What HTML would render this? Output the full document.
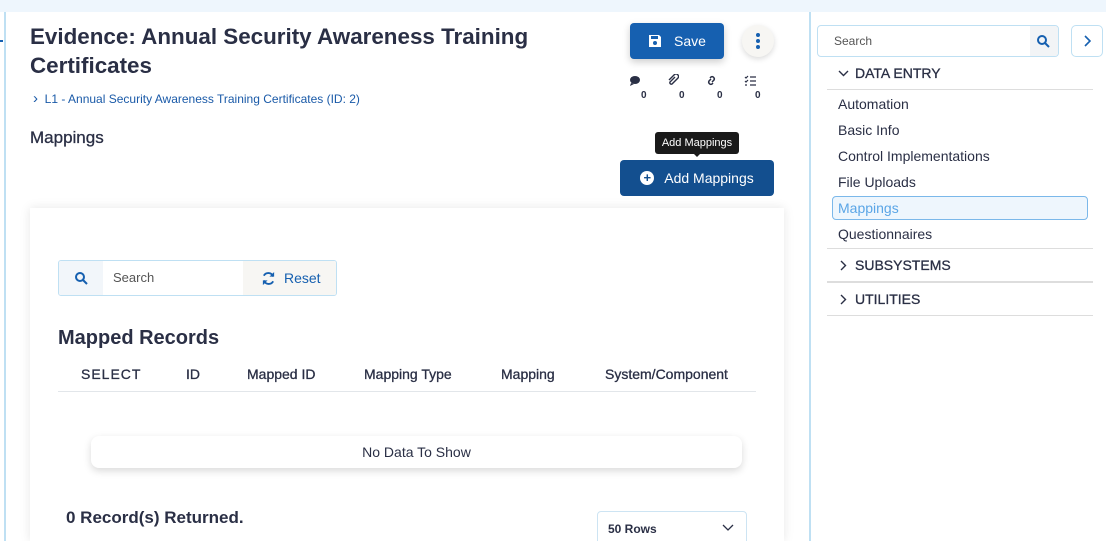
<!DOCTYPE html>
<html><head><style>
*{box-sizing:border-box;margin:0;padding:0}
html,body{width:1106px;height:541px;overflow:hidden}
body{background:#fff;font-family:"Liberation Sans",sans-serif;color:#2a2f45;position:relative}
.a{position:absolute}
.top{left:0;top:0;width:1106px;height:12px;background:#eef6fd}
.lb{left:4px;top:12px;width:2px;height:529px;background:#bfe0f3}
.rb{left:809px;top:12px;width:2px;height:529px;background:#bfe0f3}
h1{position:absolute;left:30px;top:22px;font-size:22.4px;line-height:29px;font-weight:bold;color:#2a2f45;width:530px}
.bc{left:33px;top:92px;font-size:12px;color:#1a5aa8}
.btn{background:#1660b0;color:#fff;border-radius:4px;display:flex;align-items:center;justify-content:center;font-size:14px}
.card{left:30px;top:208px;width:754px;height:333px;background:#fff;box-shadow:0 0 10px rgba(0,0,0,.1)}
.th{top:366px;font-size:14px;color:#2a2f45;-webkit-text-stroke:.3px #2a2f45}
.side{font-size:14px;color:#2a2f45;left:838px}
.hr{left:827px;width:266px;height:1px;background:#ddd}
.cnt{font-size:10px;font-weight:bold;top:90px}
</style></head><body>
<div class="a top"></div><div class="a lb"></div><div class="a rb"></div>
<div class="a" style="left:0;top:40px;width:3px;height:2px;background:#1660b0"></div>
<h1>Evidence: Annual Security Awareness Training Certificates</h1>
<div class="a bc"><span style="font-size:15px;line-height:12px">&#8250;</span>&nbsp; L1 - Annual Security Awareness Training Certificates (ID: 2)</div>
<div class="a" style="left:30px;top:128px;font-size:17px;-webkit-text-stroke:.3px #2a2f45">Mappings</div>
<div class="a btn" style="left:630px;top:23px;width:94px;height:36px;box-shadow:0 3px 8px rgba(0,0,0,.2)"><svg width="14" height="14" viewBox="0 0 14 14" style="margin-right:12px"><path d="M1 1h10l2 2v10H1z" fill="#fff"/><rect x="3" y="2" width="7" height="3" fill="#1660b0"/><circle cx="7" cy="9" r="2" fill="#1660b0"/></svg>Save</div>
<div class="a" style="left:742px;top:25px;width:32px;height:32px;border-radius:50%;background:#f7f6f3;box-shadow:0 2px 6px rgba(0,0,0,.15)"><div class="a" style="left:14px;top:8px;width:4px;height:4px;border-radius:50%;background:#1660b0;box-shadow:0 6px 0 #1660b0,0 12px 0 #1660b0"></div></div>
<svg class="a" style="left:629px;top:75px" width="12" height="12"><ellipse cx="6" cy="5" rx="5" ry="4" fill="#2a2f45"/><path d="M2 8l-1 3 4-2z" fill="#2a2f45"/></svg>
<svg class="a" style="left:667px;top:74px" width="12" height="12"><path d="M8 3l-5 5a1.5 1.5 0 0 0 2 2l6-6a2.5 2.5 0 0 0-3.5-3.5L2 6" stroke="#2a2f45" stroke-width="1.4" fill="none"/></svg>
<svg class="a" style="left:705px;top:75px" width="13" height="11"><path d="M5 3l1-1a2.2 2.2 0 0 1 3 3l-2 2M8 8l-1 1a2.2 2.2 0 0 1-3-3l2-2" stroke="#2a2f45" stroke-width="1.5" fill="none"/></svg>
<svg class="a" style="left:744px;top:75px" width="12" height="11"><path d="M1 2l1 1 2-2M1 6l1 1 2-2M6 2h6M6 6h6M6 10h6M1 10h2" stroke="#2a2f45" stroke-width="1.2" fill="none"/></svg>
<div class="a cnt" style="left:641px">0</div><div class="a cnt" style="left:679px">0</div><div class="a cnt" style="left:717px">0</div><div class="a cnt" style="left:755px">0</div>
<div class="a" style="left:655px;top:132px;width:84px;height:22px;background:#1a1a1a;border-radius:3px;color:#fff;font-size:11px;text-align:center;line-height:22px">Add Mappings</div>
<div class="a" style="left:693px;top:153px;border:4px solid transparent;border-top-color:#1a1a1a"></div>
<div class="a btn" style="left:620px;top:160px;width:154px;height:36px;background:#134f8f"><span style="display:inline-block;width:14px;height:14px;border-radius:50%;background:#fff;color:#134f8f;font-size:13px;line-height:14px;text-align:center;font-weight:bold;margin-right:10px">+</span>Add Mappings</div>
<div class="a card"></div>
<div class="a" style="left:58px;top:260px;width:279px;height:36px;border:1px solid #bfe0f3;border-radius:3px;overflow:hidden;display:flex">
<div style="width:44px;background:#f2f6fa;display:flex;align-items:center;justify-content:center"><svg width="14" height="14"><circle cx="6" cy="6" r="4" stroke="#1660b0" stroke-width="2" fill="none"/><path d="M9 9l4 4" stroke="#1660b0" stroke-width="2"/></svg></div>
<div style="width:140px;font-size:13px;color:#555;line-height:34px;padding-left:10px">Search</div>
<div style="flex:1;background:#f7f6f3;color:#1660b0;font-size:14px;line-height:34px;padding-left:18px;display:flex;align-items:center"><svg width="15" height="15" viewBox="0 0 16 16" style="margin-right:8px"><path d="M13 6A5.5 5.5 0 0 0 3 5M3 10a5.5 5.5 0 0 0 10 1" stroke="#1660b0" stroke-width="2" fill="none"/><path d="M14 1v5h-5zM2 15v-5h5z" fill="#1660b0"/></svg>Reset</div></div>
<div class="a" style="left:58px;top:327px;font-size:20px;font-weight:bold">Mapped Records</div>
<div class="a th" style="left:81px;letter-spacing:1px">SELECT</div>
<div class="a th" style="left:186px">ID</div>
<div class="a th" style="left:247px">Mapped ID</div>
<div class="a th" style="left:364px">Mapping Type</div>
<div class="a th" style="left:501px">Mapping</div>
<div class="a th" style="left:605px">System/Component</div>
<div class="a" style="left:58px;top:391px;width:698px;height:1px;background:#e2e6ea"></div>
<div class="a" style="left:91px;top:436px;width:651px;height:32px;border-radius:8px;background:#fff;box-shadow:0 3px 8px rgba(0,0,0,.15);text-align:center;line-height:32px;font-size:14px">No Data To Show</div>
<div class="a" style="left:66px;top:508px;font-size:17px;font-weight:bold">0 Record(s) Returned.</div>
<div class="a" style="left:597px;top:511px;width:150px;height:40px;border:1px solid #cde4f3;border-radius:4px;font-size:12px;font-weight:bold;padding:10px 0 0 10px">50 Rows<svg class="a" style="right:12px;top:12px" width="12" height="8"><path d="M1 1l5 5 5-5" stroke="#2a2f45" stroke-width="1.3" fill="none"/></svg></div>
<div class="a" style="left:817px;top:25px;width:242px;height:32px;border:1px solid #bfe0f3;border-radius:4px;overflow:hidden"><span class="a" style="left:16px;top:8px;font-size:12px;color:#555">Search</span><div class="a" style="right:0;top:0;width:28px;height:30px;background:#f2f4f6"><svg class="a" style="left:6px;top:8px" width="14" height="14"><circle cx="6" cy="6" r="4" stroke="#1660b0" stroke-width="2" fill="none"/><path d="M9 9l4 4" stroke="#1660b0" stroke-width="2"/></svg></div></div>
<div class="a" style="left:1071px;top:25px;width:32px;height:32px;border:1px solid #bfe0f3;border-radius:5px"><svg class="a" style="left:11px;top:9px" width="8" height="12"><path d="M2 1l5 5-5 5" stroke="#1660b0" stroke-width="1.6" fill="none"/></svg></div>
<svg class="a" style="left:838px;top:70px" width="11" height="7"><path d="M1 1l4.5 4.5L10 1" stroke="#2a2f45" stroke-width="1.4" fill="none"/></svg>
<div class="a side" style="left:855px;top:65px;-webkit-text-stroke:.3px #2a2f45">DATA ENTRY</div>
<div class="a hr" style="top:89px"></div>
<div class="a side" style="top:96px">Automation</div>
<div class="a side" style="top:122px">Basic Info</div>
<div class="a side" style="top:148px">Control Implementations</div>
<div class="a side" style="top:174px">File Uploads</div>
<div class="a" style="left:832px;top:196px;width:256px;height:24px;border:1px solid #7bb8ea;border-radius:4px;background:#eef6fd"></div>
<div class="a side" style="top:200px;color:#5aa5e6">Mappings</div>
<div class="a side" style="top:226px">Questionnaires</div>
<div class="a hr" style="top:248px"></div>
<svg class="a" style="left:840px;top:260px" width="7" height="11"><path d="M1 1l4.5 4.5L1 10" stroke="#2a2f45" stroke-width="1.4" fill="none"/></svg>
<div class="a side" style="left:855px;top:257px;-webkit-text-stroke:.3px #2a2f45">SUBSYSTEMS</div>
<div class="a hr" style="top:281px;height:2px"></div>
<svg class="a" style="left:840px;top:294px" width="7" height="11"><path d="M1 1l4.5 4.5L1 10" stroke="#2a2f45" stroke-width="1.4" fill="none"/></svg>
<div class="a side" style="left:855px;top:291px;-webkit-text-stroke:.3px #2a2f45">UTILITIES</div>
<div class="a hr" style="top:315px"></div>
</body></html>
